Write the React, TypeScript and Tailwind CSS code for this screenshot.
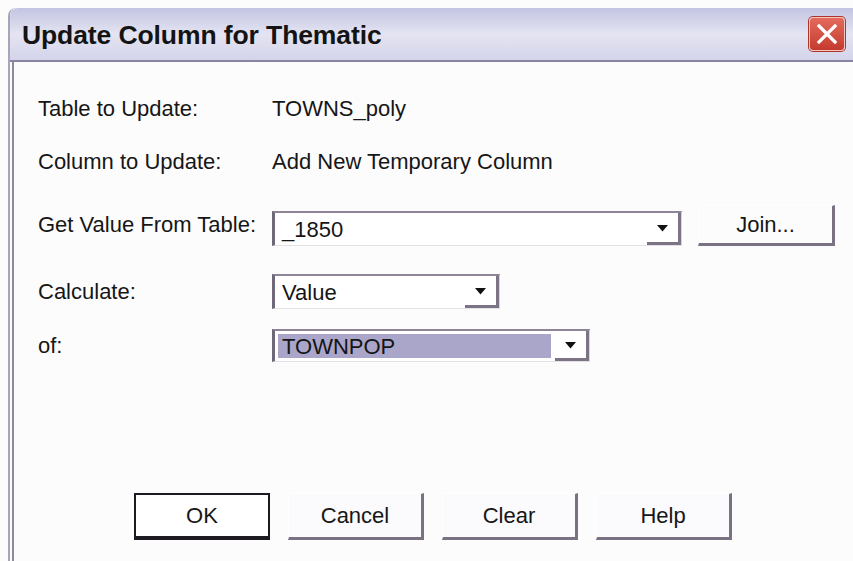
import React from "react";

const font = { fontFamily: '"Liberation Sans", Arial, sans-serif' };

function Arrow() {
  return (
    <svg width="13" height="8" viewBox="0 0 13 8">
      <path d="M1 1 L12 1 L6.5 7.5 Z" fill="#111" />
    </svg>
  );
}

function Combo({
  value,
  width,
  height,
  selected,
}: {
  value: string;
  width: string;
  height: string;
  selected?: boolean;
}) {
  return (
    <div
      className={`flex ${width} ${height} items-stretch border-t-2 border-l-[3px] border-t-[#8d8595] border-l-[#6f6878] border-r border-b border-r-[#d9d5dc] border-b-[#e4e1e6] bg-white`}
    >
      <div className="flex flex-1 items-center pl-[3px] pr-[4px] py-[3px]">
        <div
          className={`flex h-full w-full items-center pl-[4px] text-[22px] text-[#151515] ${
            selected ? "bg-[#aaa6c9]" : ""
          }`}
        >
          {value}
        </div>
      </div>
      <div className="flex w-[34px] items-center justify-center border-r-[3px] border-b-[3px] border-r-[#7c7384] border-b-[#7c7384] bg-white">
        <Arrow />
      </div>
    </div>
  );
}

function Btn({ label, primary }: { label: string; primary?: boolean }) {
  return (
    <div
      className={`flex h-[47px] w-[136px] items-center justify-center text-[22px] text-[#161616] ${
        primary
          ? "border-2 border-[#1e1a22] border-b-[4px] bg-white"
          : "border-t border-l border-t-white border-l-white border-r-[3px] border-b-[3px] border-r-[#7a7282] border-b-[#7a7282] bg-[#fbfafc]"
      }`}
    >
      {label}
    </div>
  );
}

export default function App() {
  return (
    <div className="h-[561px] w-[853px] overflow-hidden bg-[#fdfcfd]" style={font}>
      <div className="ml-[8px] mt-[8px] flex h-[553px] w-[845px] flex-col rounded-tl-[8px] border-l-2 border-l-[#a9a5b8]">
        {/* title bar */}
        <div className="flex h-[54px] items-center justify-between rounded-tl-[8px] border-b-2 border-b-[#8a84a2] bg-gradient-to-b from-[#c3c4e2] via-[#e4e4f2] to-[#d4d4ea] pl-[12px] pr-[8px]">
          <span className="pt-[4px] text-[26.5px] font-bold tracking-[-0.1px] text-[#141414]">
            Update Column for Thematic
          </span>
          <div className="flex h-[34px] w-[36px] items-center justify-center rounded-[4px] border border-[#f3c6c0] bg-gradient-to-b from-[#e36a5c] to-[#c43a2e] shadow-[0_0_0_1px_#b0342a]">
            <svg width="22" height="22" viewBox="0 0 22 22">
              <path d="M3 3 L19 19 M19 3 L3 19" stroke="white" strokeWidth="3.2" strokeLinecap="square" />
            </svg>
          </div>
        </div>

        {/* body */}
        <div className="ml-[2px] flex flex-1 flex-col border-l-2 border-l-[#8f899e] pl-[24px] text-[22px] text-[#161616]">
          <div className="mt-[34px] flex h-[24px] items-center">
            <span className="w-[234px]">Table to Update:</span>
            <span>TOWNS_poly</span>
          </div>
          <div className="mt-[29px] flex h-[24px] items-center">
            <span className="w-[234px]">Column to Update:</span>
            <span>Add New Temporary Column</span>
          </div>
          <div className="mt-[32px] flex items-end">
            <span className="mb-[5px] w-[234px]">Get Value From Table:</span>
            <Combo value="_1850" width="w-[410px]" height="h-[35px]" />
            <div className="ml-[16px] flex h-[41px] w-[137px] items-center justify-center border-t border-l border-t-white border-l-white border-r-[3px] border-b-[3px] border-r-[#7a7282] border-b-[#7a7282]">
              Join...
            </div>
          </div>
          <div className="mt-[28px] flex items-center">
            <span className="w-[234px]">Calculate:</span>
            <Combo value="Value" width="w-[228px]" height="h-[35px]" />
          </div>
          <div className="mt-[20px] flex items-center">
            <span className="w-[234px]">of:</span>
            <Combo value="TOWNPOP" width="w-[318px]" height="h-[33px]" selected />
          </div>
          <div className="mt-[131px] flex gap-[18px] pl-[96px]">
            <Btn label="OK" primary />
            <Btn label="Cancel" />
            <Btn label="Clear" />
            <Btn label="Help" />
          </div>
        </div>
      </div>
    </div>
  );
}
